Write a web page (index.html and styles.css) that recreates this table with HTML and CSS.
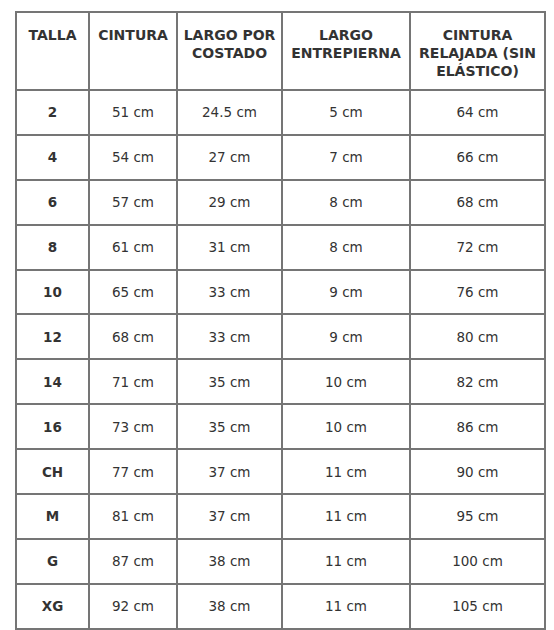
FILE: index.html
```html
<!DOCTYPE html>
<html lang="es">
<head>
<meta charset="utf-8">
<title>Tabla de tallas</title>
<link rel="stylesheet" href="styles.css">
</head>
<body>
<table class="sizes">
  <colgroup>
    <col class="c1"><col class="c2"><col class="c3"><col class="c4"><col class="c5">
  </colgroup>
  <thead>
    <tr>
      <th>TALLA</th>
      <th>CINTURA</th>
      <th>LARGO POR COSTADO</th>
      <th>LARGO ENTREPIERNA</th>
      <th>CINTURA RELAJADA (SIN ELÁSTICO)</th>
    </tr>
  </thead>
  <tbody>
    <tr><td class="t">2</td><td>51 cm</td><td>24.5 cm</td><td>5 cm</td><td>64 cm</td></tr>
    <tr><td class="t">4</td><td>54 cm</td><td>27 cm</td><td>7 cm</td><td>66 cm</td></tr>
    <tr><td class="t">6</td><td>57 cm</td><td>29 cm</td><td>8 cm</td><td>68 cm</td></tr>
    <tr><td class="t">8</td><td>61 cm</td><td>31 cm</td><td>8 cm</td><td>72 cm</td></tr>
    <tr><td class="t">10</td><td>65 cm</td><td>33 cm</td><td>9 cm</td><td>76 cm</td></tr>
    <tr><td class="t">12</td><td>68 cm</td><td>33 cm</td><td>9 cm</td><td>80 cm</td></tr>
    <tr><td class="t">14</td><td>71 cm</td><td>35 cm</td><td>10 cm</td><td>82 cm</td></tr>
    <tr><td class="t">16</td><td>73 cm</td><td>35 cm</td><td>10 cm</td><td>86 cm</td></tr>
    <tr><td class="t">CH</td><td>77 cm</td><td>37 cm</td><td>11 cm</td><td>90 cm</td></tr>
    <tr><td class="t">M</td><td>81 cm</td><td>37 cm</td><td>11 cm</td><td>95 cm</td></tr>
    <tr><td class="t">G</td><td>87 cm</td><td>38 cm</td><td>11 cm</td><td>100 cm</td></tr>
    <tr><td class="t">XG</td><td>92 cm</td><td>38 cm</td><td>11 cm</td><td>105 cm</td></tr>
  </tbody>
</table>
</body>
</html>
```

FILE: styles.css
```css
html, body {
  margin: 0;
  padding: 0;
  background: #ffffff;
}
body {
  padding: 11px 0 0 15px;
  font-family: "DejaVu Sans", Verdana, sans-serif;
  font-size: 13.5px;
  color: #333333;
}
.sizes {
  border-collapse: collapse;
  table-layout: fixed;
  width: 529px;
}
.c1 { width: 73px; }
.c2 { width: 88px; }
.c3 { width: 105px; }
.c4 { width: 128px; }
.c5 { width: 135px; }
.sizes th,
.sizes td {
  border: 2px solid #757575;
  text-align: center;
}
.sizes th {
  height: 78px;
  padding: 14px 3px 0;
  vertical-align: top;
  font-size: 14px;
  font-weight: bold;
  line-height: 17.8px;
  box-sizing: border-box;
}
.sizes td {
  height: 44.9px;
  padding: 0;
  box-sizing: border-box;
  vertical-align: middle;
}
.sizes td.t {
  font-weight: bold;
}
```
